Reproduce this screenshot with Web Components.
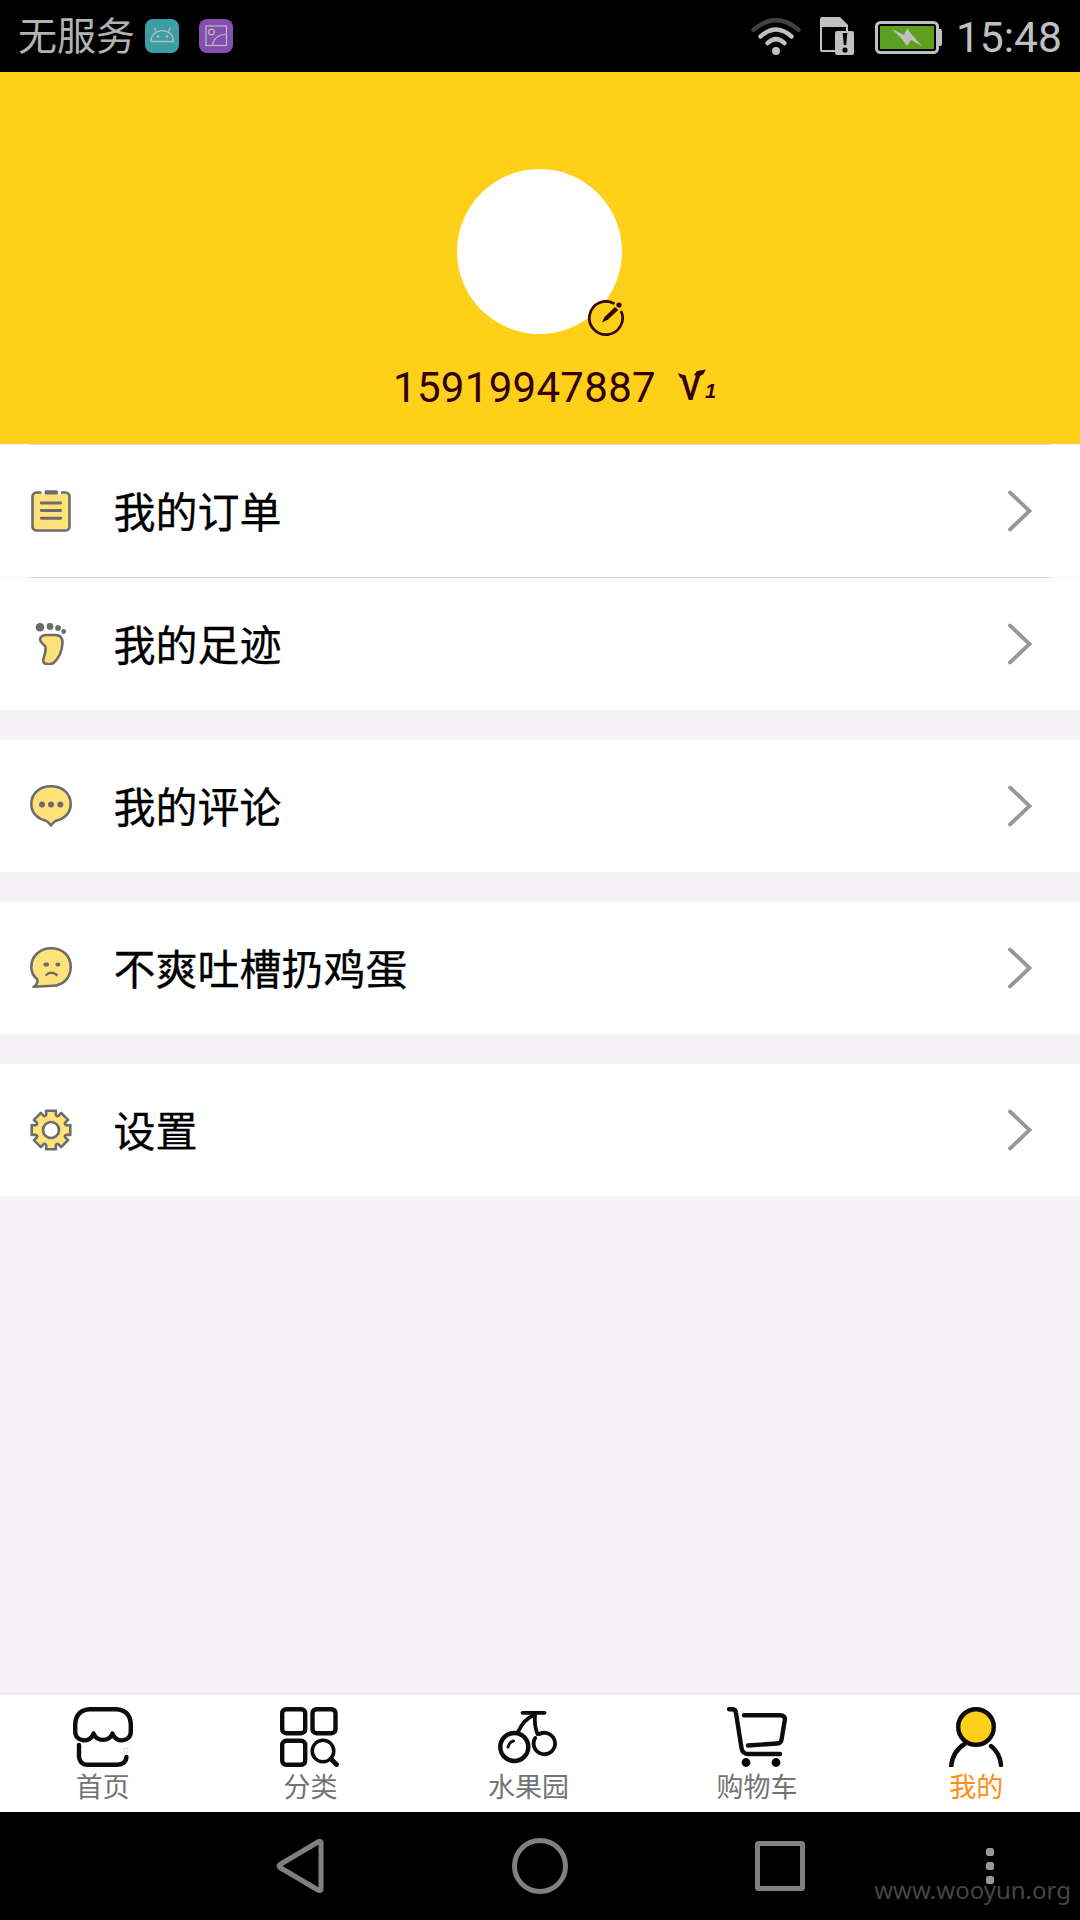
<!DOCTYPE html>
<html lang="zh-CN">
<head>
<meta charset="utf-8">
<title>我的</title>
<style>
    body {
        margin: 0;
        background: #f7f2f7;
        font-family: Roboto, "Noto Sans CJK SC", sans-serif;
    }
</style>
</head>
<body>
<mine-page>
    <status-bar slot="top" carrier="无服务" time="15:48"></status-bar>
    <user-header slot="top" phone="15919947887" level="1"></user-header>
    <menu-group lined>
        <menu-row icon="order">我的订单</menu-row>
        <menu-row icon="foot">我的足迹</menu-row>
    </menu-group>
    <menu-group><menu-row icon="comment">我的评论</menu-row></menu-group>
    <menu-group><menu-row icon="sad">不爽吐槽扔鸡蛋</menu-row></menu-group>
    <menu-group><menu-row icon="gear">设置</menu-row></menu-group>
    <tab-bar slot="bottom">
        <tab-item icon="home">首页</tab-item>
        <tab-item icon="category">分类</tab-item>
        <tab-item icon="cherry">水果园</tab-item>
        <tab-item icon="cart">购物车</tab-item>
        <tab-item icon="user" active>我的</tab-item>
    </tab-bar>
    <nav-bar slot="bottom">www.wooyun.org</nav-bar>
</mine-page>

<script>
// eight teeth around (21, 21), with rounded valleys between them
function gearPath() {
    const at = (r, a) => `${(21 + r * Math.sin(a)).toFixed(2)} ${(21 - r * Math.cos(a)).toFixed(2)}`;
    let d = '';
    for (let i = 0; i < 8; i++) {
        const a = i * Math.PI / 4;
        d += `${i ? 'L' : 'M'}${at(16.2, a - 0.3)}L${at(19.9, a - 0.25)}L${at(19.9, a + 0.25)}L${at(16.2, a + 0.3)}`;
        d += `Q${at(14, a + Math.PI / 8)} ${at(16.2, a + Math.PI / 4 - 0.3)}`;
    }
    return d + 'Z';
}

const menuStyle = 'fill="#ffe27a" stroke="#6c6c6c" stroke-width="2.6" stroke-linejoin="round" stroke-linecap="round"';
const tabStyle = 'fill="none" stroke="#0c0c0c" stroke-width="4.4" stroke-linejoin="round" stroke-linecap="round"';
const navStyle = 'fill="none" stroke="#808080" stroke-width="5" stroke-linejoin="round"';

// name: [width, height, markup]
const icons = {
    android: [34, 34, `<rect width="34" height="34" rx="8" fill="#3c9ea5"/>
        <g fill="none" stroke="#bdbdbd" stroke-width="1.3"><path d="M6 22.5C6.5 8 28 8 28.500 22.500Z"/><path d="M11 12.500L9.500 9M23.500 12.500L25 9"/></g>
        <path d="M13 16v3M11.500 17.500h3M22 16v3M20.500 17.500h3" stroke="#bdbdbd"/>`],
    gallery: [34, 34, `<rect width="34" height="34" rx="8" fill="#844fae"/>
        <g fill="none" stroke="#bdbdbd" stroke-width="1.2"><rect x="7" y="7" width="20.500" height="19.500"/><circle cx="12.500" cy="13" r="2.800"/><path d="M13.500 26.500Q15 16 27.500 15"/></g>`],
    wifi: [50, 38, `<g fill="none" stroke="#c0c0c0" stroke-width="4.400" stroke-linecap="round">
        <path d="M2.500 12.700Q25 -6.500 47.500 12.700" stroke="#414141"/><path d="M9.500 19.500Q25 5.500 40.500 19.500"/><path d="M16.500 26.200Q25 18 33.500 26.200"/></g>
        <circle cx="25" cy="34" r="4" fill="#c0c0c0"/>`],
    sim: [34, 38, `<path fill="#c0c0c0" fill-rule="evenodd" d="M2 0H20L28 8V14H32Q34 14 34 16V36Q34 38 32 38H17Q15 38 15 35H2Q0 35 0 33V2Q0 0 2 0ZM2 10V33H15V16Q15 14 17 14H26V10Z"/>
        <path d="M22.700 16H27.300L26.200 28H23.800Z" fill="#000"/><circle cx="25" cy="33" r="2.600" fill="#000"/>`],
    battery: [67, 33, `<rect x="1.500" y="1.500" width="61" height="30" rx="4" fill="none" stroke="#c0c0c0" stroke-width="3"/>
        <rect x="5" y="5" width="54" height="23" fill="#5f9f20"/><path d="M64 8h1.500q1.500 0 1.500 2v13q0 2-1.500 2H64z" fill="#c0c0c0"/>
        <path d="M17 8L29 14L32 7.500L38 15L47 25L36 19L32 25L27 18Z" fill="#c0c0c0"/>`],
    edit: [36, 36, `<circle cx="18" cy="18" r="17" fill="#ffd01a"/>
        <path d="M26.500 3.800A16.600 16.600 0 1 0 33 11" fill="none" stroke="#330808" stroke-width="2.700"/>
        <path d="M14 22.500L16.500 17L27 7L30.300 10L20 19.500Z" fill="#330000"/><circle cx="31" cy="5" r="2.600" fill="#330000"/>`],
    arrow: [24, 42, `<path d="M2 2.500L21.500 21L2 39.500" fill="none" stroke="#969896" stroke-width="3.800" stroke-linecap="round"/>`],
    order: [42, 42, `<g ${menuStyle}><rect x="2.500" y="2.500" width="37" height="38" rx="4"/>
        <path d="M11.500 1v4h3.500V1zM27.500 1v4h3.500V1z" fill="#fff" stroke="none"/><path d="M11 4.200h20v3H11z" stroke="none"/>
        <path d="M16 1.500h10.500v1.700H16z" fill="#6c6c6c"/><path d="M11.300 13H30.700M11.300 20.500H30.700M11.300 28.300H30.700" stroke-width="2.900"/></g>`],
    foot: [42, 42, `<g fill="#6c6c6c"><circle cx="10" cy="4.200" r="4.300"/><circle cx="20" cy="3.500" r="3.400"/><circle cx="28" cy="5" r="2.900"/><circle cx="33.700" cy="8.500" r="2.400"/></g>
        <path ${menuStyle} d="M17 12H24C30.500 11.500 32.700 15 32.500 20C32 29 28 36 23.500 40Q19 42.500 14 40C11 37 16.500 32 15.500 24C14 21 10 20 10 16Q11 12 17 12Z"/>`],
    comment: [42, 42, `<path ${menuStyle} d="M21 1.300C33 1.300 40.700 9 40.700 19C40.700 29 33 34.500 25.500 36Q23 37.500 21 40.500Q19 37.500 16.500 36C9 34.500 1.300 29 1.300 19C1.300 9 9 1.300 21 1.300Z"/>
        <g fill="#6c6c6c"><circle cx="12" cy="19.500" r="3"/><circle cx="21" cy="19.500" r="3"/><circle cx="30.300" cy="19.500" r="3"/></g>`],
    sad: [42, 42, `<path ${menuStyle} d="M21 1.300C33 1.300 40.700 9 40.700 20C40.700 32 32 38.300 23 38.700L3.500 39.800Q8 37.500 7.500 32.500C3 29 1.300 25 1.300 20C1.300 9 10 1.300 21 1.300Z"/>
        <path d="M15.500 17.500h1.500M27.500 17.500h.8" stroke="#6c6c6c" stroke-width="4.200" stroke-linecap="round"/><path d="M15.500 28.500Q21 23 27.500 28.500" fill="none" stroke="#6c6c6c" stroke-width="2.300"/>`],
    gear: [42, 42, `<path ${menuStyle} d="${gearPath()}"/><circle cx="21" cy="21" r="8" fill="#fff" stroke="#6c6c6c" stroke-width="2.700"/>`],
    home: [60, 60, `<g ${tabStyle}><path d="M2.200 17V24C2 36 18 36 20.500 26.500C24 35 36 35 39.500 26.500C42 36 58 36 57.800 24V17Q57 3 43 2.200H17Q3 3 2.200 17Z"/>
        <path d="M6 38V50Q7 57.500 14 57.800H44Q53 57.500 53.500 50"/></g><ellipse cx="53" cy="43.500" rx="2" ry="2.500" fill="none" stroke="#ddd"/>`],
    category: [60, 60, `<g ${tabStyle}><rect x="2.200" y="2.200" width="23" height="24" rx="4"/><rect x="32.500" y="2.200" width="23" height="24" rx="4"/>
        <rect x="2.200" y="33.800" width="23" height="24" rx="4"/><circle cx="43" cy="44" r="10.800" stroke-width="3.500"/><path d="M51 52L56.500 57.500" stroke-width="4.800"/></g>`],
    cherry: [60, 60, `<g ${tabStyle}><path d="M24.500 5.800H46.500" stroke-width="3.800"/><circle cx="16.300" cy="40" r="14"/>
        <path d="M20 25Q26 12 36 8M37 8Q36 19 39.500 27M37.200 31A10.700 10.700 0 1 0 41.500 27" stroke-width="3.800"/>
        <path d="M10 40Q11 35 15.500 34" stroke-width="3"/></g>`],
    cart: [60, 60, `<g ${tabStyle}><path d="M2 2.200H5Q8.500 2 9 6L14.500 41Q15.500 47 21 47H53"/><path d="M17 8.300H53Q58.500 8.500 57.800 13L54.500 33Q54 36.300 50 36.500L21 38.500"/></g>
        <circle cx="19" cy="55.500" r="4.400"/><circle cx="49" cy="55.500" r="4.400"/>`],
    user: [60, 60, `<g ${tabStyle}><circle cx="30" cy="20" r="17.800" fill="#ffd01a"/><path d="M19.500 36.500Q6 44 5 61" stroke-linecap="butt"/><path d="M45 39Q54 46 55 58"/></g>`],
    back: [48, 54, `<path ${navStyle} d="M45 3V51Q43.500 52 42 51L4 28.500Q2 27 4 25.500L42 3Q43.500 2 45 3Z"/>`],
    circle: [56, 56, `<circle ${navStyle} cx="28" cy="28" r="25.500"/>`],
    square: [50, 50, `<rect ${navStyle} x="2.500" y="2.500" width="45" height="45" rx="1"/>`],
    more: [8, 36, `<g fill="#999"><rect width="8" height="8" rx="2.500"/><rect y="14" width="8" height="8" rx="2.500"/><rect y="28" width="8" height="8" rx="2.500"/></g>`],
};

// every element: render() gives the shadow markup once it is connected
class BaseElement extends HTMLElement {
    constructor() {
        super();
        this.attachShadow({mode: 'open'});
    }

    connectedCallback() {
        const tmp = document.createElement('template');
        tmp.innerHTML = this.render();
        this.shadowRoot.replaceChildren(tmp.content.cloneNode(true));
    }
}

customElements.define('ui-icon', class extends BaseElement {
    render() {
        const [w, h, body] = icons[this.getAttribute('name')];
        return `
            <style>
                :host { display: block; flex: none; width: ${w}px; height: ${h}px; }
                svg { display: block; }
            </style>
            <svg width="${w}" height="${h}" viewBox="0 0 ${w} ${h}">${body}</svg>`;
    }
});

customElements.define('mine-page', class extends BaseElement {
    render() {
        return `
            <style>
                :host { display: flex; flex-direction: column; width: 1080px; height: 1920px; overflow: hidden; }
                main { flex: 1; display: flex; flex-direction: column; gap: 30px; }
            </style>
            <slot name="top"></slot>
            <main><slot></slot></main>
            <slot name="bottom"></slot>`;
    }
});

customElements.define('status-bar', class extends BaseElement {
    render() {
        return `
            <style>
                :host { display: flex; align-items: center; height: 72px; box-sizing: border-box; padding: 0 18px 0 18px; background: #000; color: #c0c0c0; }
                .carrier { font-size: 39px; line-height: 72px; color: #b2b2b2; margin: 2px 10px 0 0; }
                .apps { display: flex; gap: 20px; margin-right: auto; }
                .time { font-size: 42.6px; line-height: 72px; margin: 2px 0 0 14px; }
                [name=sim] { margin: 0 21px 0 19px; }
                [name=battery] { margin-top: 3px; }
            </style>
            <span class="carrier">${this.getAttribute('carrier')}</span>
            <div class="apps"><ui-icon name="android"></ui-icon><ui-icon name="gallery"></ui-icon></div>
            <ui-icon name="wifi"></ui-icon>
            <ui-icon name="sim"></ui-icon>
            <ui-icon name="battery"></ui-icon>
            <span class="time">${this.getAttribute('time')}</span>`;
    }
});

customElements.define('user-header', class extends BaseElement {
    render() {
        return `
            <style>
                :host { display: flex; flex-direction: column; align-items: center; box-sizing: border-box; height: 372px; padding-top: 97px; background: #ffd01a; color: #330000; }
                .avatar { position: relative; width: 165px; height: 165px; margin-right: 1px; border-radius: 50%; background: #fff; }
                .avatar ui-icon { position: absolute; right: -2px; bottom: -2px; }
                .name { display: flex; align-items: center; gap: 21px; margin: 29px 0 0 32px; font-size: 42px; line-height: 50px; }
                .phone { letter-spacing: 0.3px; }
                .level { display: block; overflow: visible; }
            </style>
            <div class="avatar"><ui-icon name="edit"></ui-icon></div>
            <div class="name">
                <span class="phone">${this.getAttribute('phone')}</span>
                <svg class="level" width="42" height="50" viewBox="0 0 42 50" fill="#330000">
                    <text x="4" y="37" font-family="Lato" font-size="34" font-weight="900" textLength="19" lengthAdjust="spacingAndGlyphs">V</text>
                    <path d="M1 10L9 13L9 17L3 14.500ZM17 12L20 8L29 6.500L26 11.500L21 13.500Z"/>
                    <text x="28" y="35" font-family="Liberation Sans" font-size="20" font-weight="700" font-style="italic">${this.getAttribute('level')}</text>
                </svg>
            </div>`;
    }
});

customElements.define('menu-group', class extends BaseElement {
    render() {
        return `
            <style>
                :host { display: block; background: #fff; }
                :host([lined]) ::slotted(menu-row) { border-top: 1px solid; border-image: linear-gradient(90deg, #f4f4f4 30px, #dadada 30px, #dadada 1050px, #f4f4f4 1050px) 1; }
            </style>
            <slot></slot>`;
    }
});

customElements.define('menu-row', class extends BaseElement {
    render() {
        return `
            <style>
                :host { display: flex; align-items: center; height: 132px; padding: 0 48px 0 30px; color: #000; font-size: 42px; }
                .label { flex: 1; margin-left: 41.5px; line-height: 60px; padding-top: 6px; -webkit-text-stroke: 0.3px #000; }
            </style>
            <ui-icon name="${this.getAttribute('icon')}"></ui-icon>
            <span class="label"><slot></slot></span>
            <ui-icon name="arrow"></ui-icon>`;
    }
});

customElements.define('tab-bar', class extends BaseElement {
    render() {
        return `
            <style>
                :host { display: flex; height: 117px; border-top: 3px solid #ededee; background: #fff; }
                ::slotted(tab-item) { flex: 1 1 auto; }
                ::slotted(tab-item:not([active])) { padding-right: 1px; margin-left: -1px; }
            </style>
            <slot></slot>`;
    }
});

customElements.define('tab-item', class extends BaseElement {
    render() {
        return `
            <style>
                :host { display: flex; flex-direction: column; align-items: center; padding-top: 12px; color: #737373; font-size: 27px; line-height: 42px; }
                :host([active]) { color: #ff8c14; }
            </style>
            <ui-icon name="${this.getAttribute('icon')}"></ui-icon>
            <span><slot></slot></span>`;
    }
});

customElements.define('nav-bar', class extends BaseElement {
    render() {
        return `
            <style>
                :host { position: relative; display: flex; align-items: center; height: 108px; box-sizing: border-box; padding: 0 86px 0 276px; background: #000; }
                [name=circle] { margin: 0 187px 0 188px; }
                [name=more] { margin-left: auto; }
                .mark { position: absolute; right: 9px; bottom: 12px; font: 24px/36px "Noto Sans", sans-serif; color: #454545; }
            </style>
            <ui-icon name="back"></ui-icon>
            <ui-icon name="circle"></ui-icon>
            <ui-icon name="square"></ui-icon>
            <ui-icon name="more"></ui-icon>
            <span class="mark"><slot></slot></span>`;
    }
});
</script>
</body>
</html>
